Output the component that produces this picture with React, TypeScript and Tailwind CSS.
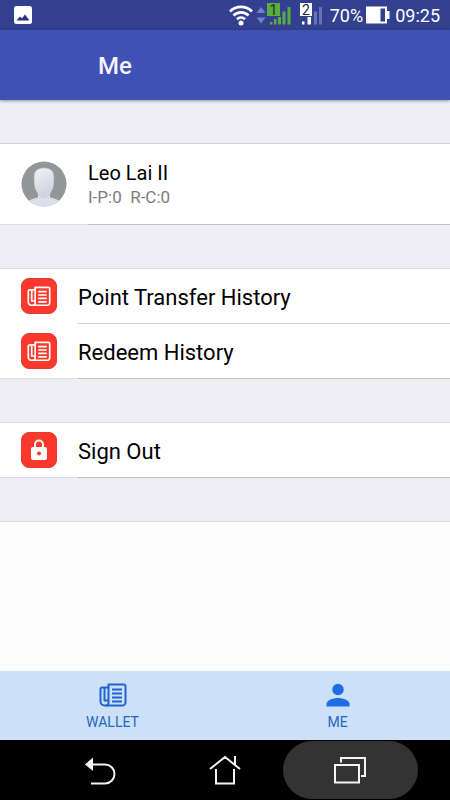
import { ReactNode } from "react";
import clsx from "clsx";

const PaperIcon = ({ className }: { className?: string }) => (
  <svg
    viewBox="0 0 28 24"
    className={className}
    fill="none"
    stroke="currentColor"
    strokeWidth="2"
    strokeLinejoin="round"
    aria-hidden="true"
  >
    <path d="M9.5 1.5H25a1.5 1.5 0 0 1 1.5 1.5v16.5a3 3 0 0 1-3 3h-18a4 4 0 0 1-4-4V6A1.5 1.5 0 0 1 3 4.500h6.500z" />
    <path d="M9.500 4.500v15.500a2.500 2.500 0 0 1-2.500 2.500M5.500 5v12.500h4" />
    <path d="M13 6.500h10M13 10.500h10M13 14.500h10M13 18.500h10" strokeWidth="1.900" />
  </svg>
);

const LockIcon = () => (
  <svg viewBox="0 0 18 22" className="w-[18px]" aria-hidden="true">
    <path
      d="M5 9V5.500a4 4 0 0 1 8 0V9"
      fill="none"
      stroke="currentColor"
      strokeWidth="2"
    />
    <path
      d="M3 8h12a2 2 0 0 1 2 2v9a2 2 0 0 1-2 2H3a2 2 0 0 1-2-2v-9a2 2 0 0 1 2-2zM9 12.400a2 2 0 1 0 0 4 2 2 0 0 0 0-4z"
      fill="currentColor"
      fillRule="evenodd"
    />
  </svg>
);

const PersonIcon = () => (
  <svg viewBox="0 0 24 24" className="h-6" fill="#1f6de6" aria-hidden="true">
    <circle cx="12" cy="6.500" r="5.700" />
    <path d="M.5 23.500v-2.500c0-4 7-6 11.500-6s11.500 2 11.500 6v2.500z" />
  </svg>
);

const Avatar = () => (
  <svg viewBox="0 0 46 46" className="w-[46px] shrink-0" aria-hidden="true">
    <defs>
      <clipPath id="avatarClip">
        <circle cx="23" cy="23" r="22.500" />
      </clipPath>
      <linearGradient id="avatarFace" x1="0" y1="0" x2="0.300" y2="1">
        <stop offset="0" stopColor="#f1f2f7" />
        <stop offset="1" stopColor="#cfd3df" />
      </linearGradient>
    </defs>
    <g clipPath="url(#avatarClip)">
      <rect width="46" height="46" fill="#919696" />
      <path
        d="M4 46c1-6 6-8 13-9.500V32h12v4.500c7 1.500 12 3.500 13 9.500z"
        fill="#dcdfea"
      />
      <path
        d="M23 7c7 0 9.800 3.500 9.800 9 0 3 .2 7-1 11-1.500 5-4.800 9.500-8.800 9.500s-7.300-4.500-8.800-9.500c-1.200-4-1-8-1-11C13.200 10.500 16 7 23 7z"
        fill="url(#avatarFace)"
        stroke="#c3c8d2"
        strokeWidth=".6"
      />
    </g>
  </svg>
);

const StatusBar = () => (
  <div className="flex h-[30px] items-center bg-[#333f8f] pr-[10px] pl-3.5 text-[18px] text-white">
    <svg viewBox="0 0 18 18" className="w-[18px]" aria-hidden="true">
      <rect width="18" height="18" rx="2.500" fill="#fff" />
      <path d="M2.500 14.500l3.500-4 2 2 3-4 4.500 6z" fill="#27337b" />
    </svg>
    <svg viewBox="0 0 96 24" className="ml-auto w-24" aria-hidden="true">
      <g fill="none" stroke="#fff" strokeWidth="2.800">
        <path d="M2 8.500a15.500 15.500 0 0 1 22 0" />
        <path d="M5.500 12.500a10.500 10.500 0 0 1 15 0" />
        <path d="M9 16.300a5.700 5.700 0 0 1 8 0" />
      </g>
      <circle cx="13" cy="20" r="2.500" fill="#fff" />
      <path d="M28.500 10l4.500-6 4.500 6zM28.500 14.500l4.500 6 4.500-6z" fill="#7380c6" />
      <g fill="#58ad3e">
        <rect x="39" y="0" width="13" height="13" />
        <rect x="42" y="19" width="2.500" height="2.500" />
        <rect x="46" y="16" width="2.500" height="5.500" />
        <rect x="50" y="14" width="3" height="7.500" />
        <rect x="54.500" y="8.500" width="3" height="13" />
        <rect x="59.500" y="4" width="3" height="17.500" />
      </g>
      <rect x="72" y="0" width="12" height="13" fill="#fff" />
      <rect x="74" y="18.500" width="2.500" height="3" fill="#fff" />
      <rect x="79.500" y="14" width="3.500" height="7.500" fill="#fff" />
      <rect x="86" y="8.500" width="3" height="13" fill="#6772b7" />
      <rect x="91" y="4" width="3" height="17.500" fill="#6772b7" />
      <g fontFamily="Roboto, sans-serif" fontSize="14" textAnchor="middle">
        <text x="45.500" y="11.500" fill="#17331a">
          1
        </text>
        <text x="78" y="11.500" fill="#1d2456">
          2
        </text>
      </g>
    </svg>
    <span className="ml-1.5">70%</span>
    <svg viewBox="0 0 26 18" className="ml-0.5 w-[26px]" aria-hidden="true">
      <path d="M1 .5h21v4.500h2.500v8H22v4.500H1z" fill="#fff" />
      <rect x="15.500" y="2.500" width="4.500" height="13" fill="#333f8f" />
    </svg>
    <span className="ml-1">09:25</span>
  </div>
);

const ListRow = ({
  icon,
  label,
  last,
}: {
  icon: ReactNode;
  label: string;
  last?: boolean;
}) => (
  <li className="flex h-[55px]">
    <div
      className={clsx(
        "flex items-center border-b px-[21px]",
        last ? "border-[#dedee2]" : "border-transparent",
      )}
    >
      <span className="flex size-9 items-center justify-center rounded-lg border border-[#e03c30] bg-[#fb382b] text-white">
        {icon}
      </span>
    </div>
    <button
      type="button"
      className={clsx(
        "grow border-b pt-0.5 text-left text-[22px] text-black",
        last ? "border-[#bfbfc8]" : "border-[#d0d0d0]",
      )}
    >
      {label}
    </button>
  </li>
);

const TabButton = ({ icon, label }: { icon: ReactNode; label: string }) => (
  <button
    type="button"
    className="flex flex-1 flex-col items-center gap-1 pt-3 text-[#2467bd]"
  >
    {icon}
    <span className="text-[14px] leading-[22px]">{label}</span>
  </button>
);

const NavButtons = () => (
  <nav className="flex h-[60px] items-center justify-center bg-black text-[#f4f4f4]">
    <button
      type="button"
      aria-label="Back"
      className="-mx-[5px] flex h-[58px] w-[135px] items-center justify-center"
    >
      <svg viewBox="0 0 32 30" className="w-8" aria-hidden="true">
        <path
          d="M8 9.500h13a9.500 9.500 0 0 1 0 19H7"
          fill="none"
          stroke="currentColor"
          strokeWidth="2"
        />
        <path d="M1 9.500l8-7v13.500z" fill="currentColor" />
      </svg>
    </button>
    <button
      type="button"
      aria-label="Home"
      className="-mx-[5px] flex h-[58px] w-[135px] items-center justify-center"
    >
      <svg
        viewBox="0 0 32 30"
        className="w-8"
        fill="none"
        stroke="currentColor"
        strokeWidth="2"
        aria-hidden="true"
      >
        <path d="M1 14L16 2l15 12M26 10V1M7 14v14.500h18V14" />
      </svg>
    </button>
    <button
      type="button"
      aria-label="Recent apps"
      className="-mx-[5px] flex h-[58px] w-[135px] items-center justify-center rounded-full bg-[#333]"
    >
      <svg
        viewBox="0 0 34 28"
        className="w-[34px]"
        fill="none"
        stroke="currentColor"
        strokeWidth="2"
        aria-hidden="true"
      >
        <path d="M2 9h24v17.500H2z" />
        <path d="M8 6.500V2h24v18h-4" />
      </svg>
    </button>
  </nav>
);

function App() {
  return (
    <div className="flex min-h-screen flex-col bg-[#fdfdfd] font-[Roboto,sans-serif]">
      <StatusBar />
      <header className="relative flex h-[70px] items-center bg-[#3f51b3] pt-0.5 pl-[98px] shadow-[0_1px_3px_rgba(0,0,0,0.4)]">
        <h1 className="text-[24px] font-medium text-[#f3f4ff]">Me</h1>
      </header>

      <main className="grow">
        <div className="space-y-[43px] border-b border-[#d9d9df] bg-[#efeef4] py-[43px]">
          <section className="flex h-[82px] border-t border-[#d3d3d9] bg-white">
            <div className="flex items-center border-b border-[#dedee2] px-[21px]">
              <Avatar />
            </div>
            <div className="flex grow flex-col justify-center border-b border-[#c4c4c8] pt-0.5">
              <h2 className="text-[20px] leading-6 text-black">Leo Lai II</h2>
              <p className="text-[17px] leading-6 whitespace-pre text-[#7c7c7c]">
                {"I-P:0  R-C:0"}
              </p>
            </div>
          </section>

          <ul className="border-t border-[#d9d9df] bg-white">
            <ListRow
              icon={<PaperIcon className="w-6" />}
              label="Point Transfer History"
            />
            <ListRow
              icon={<PaperIcon className="w-6" />}
              label="Redeem History"
              last
            />
          </ul>

          <ul className="border-t border-[#d9d9df] bg-white">
            <ListRow icon={<LockIcon />} label="Sign Out" last />
          </ul>
        </div>
      </main>

      <footer>
        <div className="flex h-[69px] bg-[#cce0f7]">
          <TabButton
            icon={<PaperIcon className="h-6 text-[#2163cd]" />}
            label="WALLET"
          />
          <TabButton icon={<PersonIcon />} label="ME" />
        </div>
        <NavButtons />
      </footer>
    </div>
  );
}

export default App;
